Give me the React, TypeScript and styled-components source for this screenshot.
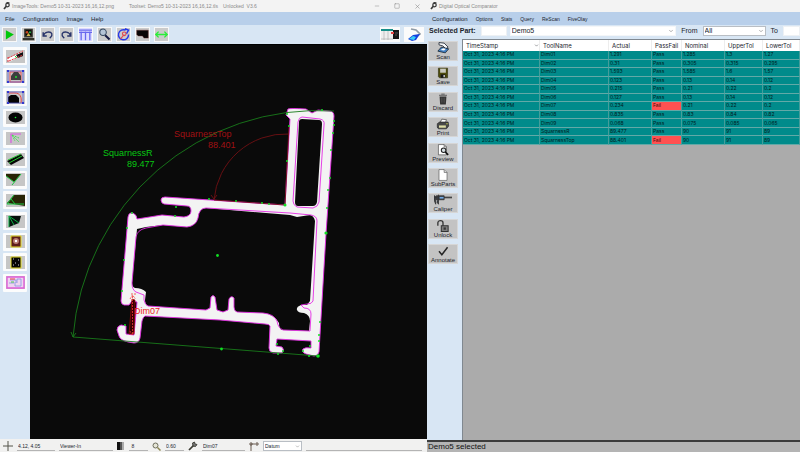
import React from "react";
import styled, { createGlobalStyle } from "styled-components";
import { ChevronDown, Minus, Square, X } from "lucide-react";

const GlobalStyle = createGlobalStyle`
  * { box-sizing: border-box; }
  body { margin: 0; background: #f0f0f0; }
  button, input, select { font: inherit; color: inherit; margin: 0; border-radius: 0; }
  svg { display: block; flex: none; }
`;

const sans = `"Liberation Sans", Arial, sans-serif`;

const Desktop = styled.div`
  display: grid;
  grid-template-columns: 427fr 373fr;
  height: 100vh;
  overflow: hidden;
  font: 6px/8px ${sans};
  color: #20242c;
`;

const Pane = styled.section`
  display: flex;
  flex-direction: column;
  min-width: 0;
  min-height: 0;
  background: #d8e6f4;
`;

const TitleBar = styled.header`
  display: flex;
  align-items: center;
  flex: none;
  height: 12px;
  padding: 0 6px 0 3px;
  gap: 2px;
  background: #f3f3f3;
  color: #8a8a8a;
  font-size: 5px;
  white-space: pre;
`;

const TitleText = styled.span<{ $gap?: number }>`
  margin-right: ${(p) => p.$gap ?? 0}px;
`;

const WindowButtons = styled.div`
  display: flex;
  margin-left: auto;
  gap: 12px;
`;

const WindowButton = styled.button`
  display: grid;
  place-items: center;
  width: 8px;
  height: 8px;
  padding: 0;
  border: 0;
  background: none;
`;

const MenuBar = styled.nav<{ $gap: number }>`
  display: flex;
  align-items: center;
  flex: none;
  height: 13px;
  padding: 0 5px;
  gap: ${(p) => p.$gap}px;
  background: #b8cfea;
`;

const MenuItem = styled.button<{ $small?: boolean }>`
  padding: 0;
  border: 0;
  background: none;
  font-size: ${(p) => (p.$small ? 5 : 6)}px;
`;

const ToolBar = styled.div`
  display: flex;
  align-items: center;
  flex: none;
  height: 19px;
  padding: 0 3px 0 2px;
  gap: 4px;
`;

const ToolButton = styled.button<{ $plain?: boolean }>`
  display: grid;
  place-items: center;
  width: 15px;
  height: 15px;
  padding: 0;
  border: 1px solid #f8f8f8;
  background: ${(p) => (p.$plain ? "#dcdcff" : "#cbcbcb")};
`;

const ViewButton = styled.button<{ $first?: boolean }>`
  display: grid;
  place-items: center;
  width: 20px;
  height: 15px;
  padding: 0;
  border: 0;
  background: #fbfbfb;
  margin-left: ${(p) => (p.$first ? "auto" : 0)};
`;

const Body = styled.div`
  display: flex;
  flex: 1;
  min-height: 0;
`;

const Palette = styled.aside`
  display: flex;
  flex-direction: column;
  justify-content: space-between;
  align-items: center;
  flex: none;
  width: 30px;
  height: 248px;
  padding-top: 3px;
`;

const PaletteButton = styled.button`
  display: grid;
  place-items: center;
  width: 24px;
  height: 18px;
  padding: 0;
  border: 0;
  border-radius: 1px;
  background: #fcfcfc;
`;

const Viewer = styled.main`
  flex: 1;
  min-width: 0;
  background: #0a0a0a;
  border-top: 1px solid #000;
  svg { width: 100%; height: 100%; }
`;

const StatusBar = styled.footer`
  display: flex;
  align-items: center;
  flex: none;
  height: 13px;
  padding: 1px 5px 0 3px;
  gap: 4px;
  background: #f1f1f0;
  font-size: 5px;
`;

const StatusField = styled.input<{ $width?: number }>`
  ${(p) => (p.$width ? `flex: none; width: ${p.$width}px;` : "flex: 1; min-width: 0;")}
  height: 10px;
  padding: 0 1px;
  border: 0;
  border-bottom: 1px solid #b4b4b4;
  background: none;
  outline: 0;
`;

const SelectBox = styled.span<{ $grow?: boolean; $width?: number; $framed?: boolean }>`
  display: grid;
  align-items: center;
  ${(p) => (p.$grow ? "flex: 1; min-width: 0;" : `flex: none; width: ${p.$width}px;`)}
  height: 10px;
  background: #fff;
  border: 1px solid ${(p) => (p.$framed ? "#b9bec4" : "#f4f6f8")};
  > * { grid-area: 1 / 1; }
  svg { justify-self: end; margin-right: 1px; pointer-events: none; color: #666; }
`;

const Select = styled.select`
  width: 100%;
  height: 8px;
  padding: 0 8px 0 1px;
  border: 0;
  appearance: none;
  background: transparent;
  outline: 0;
`;

const FilterBar = styled.form`
  display: flex;
  align-items: center;
  flex: none;
  height: 14px;
  padding: 0 0 3px 2px;
  gap: 3px;
  font-size: 7px;
`;

const FilterLabel = styled.label<{ $bold?: boolean }>`
  flex: none;
  margin: 0 2px;
  margin-left: ${(p) => (p.$bold ? 0 : 2)}px;
  font-weight: ${(p) => (p.$bold ? 700 : 400)};
  white-space: nowrap;
`;

const FilterInput = styled.input<{ $width: number }>`
  flex: none;
  width: ${(p) => p.$width}px;
  height: 10px;
  padding: 0 1px;
  border: 1px solid #eef1f4;
  background: #fff;
`;

const Actions = styled.aside`
  display: flex;
  flex-direction: column;
  justify-content: space-between;
  flex: none;
  width: 35px;
  height: 225px;
  padding: 2px 4px 0 1px;
`;

const ActionButton = styled.button`
  display: flex;
  flex-direction: column;
  align-items: center;
  justify-content: space-between;
  width: 30px;
  height: 20px;
  padding: 0;
  border: 1px solid #d6d6d6;
  background: #c3c3c3;
  line-height: 6px;
`;

const Results = styled.div`
  flex: 1;
  min-width: 0;
  background: #ababab;
  border-top: 1px solid #808890;
  border-left: 1px solid #808890;
  overflow: hidden;
`;

const Table = styled.table`
  width: 100%;
  height: 105px;
  table-layout: fixed;
  border-collapse: separate;
  border-spacing: 0;
  font: 5px/7px Inter, ${sans};
`;

const HeadCell = styled.th<{ $width: number }>`
  width: ${(p) => p.$width}px;
  height: 11px;
  padding: 0 0 0 3px;
  border-right: 1px solid #ededed;
  background: #fff;
  font-size: 6px;
  font-weight: 400;
  text-align: left;
  white-space: nowrap;
`;

const HeadContent = styled.span`
  display: flex;
  align-items: center;
  justify-content: space-between;
`;

const Cell = styled.td<{ $fail?: boolean }>`
  padding: 0 1px;
  border-right: 1px solid #459d9b;
  border-bottom: 1px solid #62a9a7;
  background: ${(p) => (p.$fail ? "#ff5151" : "#008b8b")};
  color: ${(p) => (p.$fail ? "#3c0808" : "#021c1e")};
  white-space: nowrap;
`;

const Message = styled.footer`
  flex: none;
  height: 12px;
  padding-left: 1px;
  border-top: 2px solid #3c3c3c;
  background: #b4b4b4;
  color: #111;
  font-size: 8px;
  line-height: 10px;
`;

const AppMark = () => (
  <svg width="7" height="8" viewBox="0 0 14 16" fill="none" stroke="#3c3c3c" strokeWidth="2.5">
    <path d="M2 14l5-6" strokeWidth="3.5" />
    <circle cx="9" cy="6" r="3.5" />
    <path d="M6 3l3-2 4 1" />
  </svg>
);

const Wrench = () => (
  <svg width="10" height="10" viewBox="0 0 20 20" fill="none" stroke="#3b3b32" strokeWidth="3.5">
    <path d="M2 18L12 8" />
    <path d="M9 4l4-2 1 4 4 1-3 4-5-1z" fill="#777" strokeWidth="1.8" />
  </svg>
);

const toolIcons: [string, React.ReactNode][] = [
  ["Run", <path d="M4 3l11 6-11 7z" fill="#00c80a" />],
  ["Camera", <><path d="M3 1h12v12H3zM1 14h16v3H1z" fill="#35352d" /><path d="M5 3h8v8H5z" fill="#050505" /><circle cx="7" cy="6" r="1.8" fill="#c84920" /><circle cx="11" cy="6" r="1.6" fill="#2aa646" /><path d="M6 11l3-4 3 4z" fill="#d1b64b" /></>],
  ["Undo", <path d="M3 6v5h5M3 11c2-6 10-7 12-3 1 3-1 4-3 6" fill="none" stroke="#27336a" strokeWidth="1.9" />],
  ["Redo", <path d="M15 6v5h-5M15 11c-2-6-10-7-12-3-1 3 1 4 3 6" fill="none" stroke="#27336a" strokeWidth="1.9" />],
  ["Columns", <path d="M0 3h18M3 5v12M9 5v12M15 5v12M0 6h18" fill="none" stroke="#6868ee" strokeWidth="1.8" />],
  ["Zoom", <><circle cx="7" cy="6" r="4.500" fill="#b4c4d6" stroke="#33465d" strokeWidth="1.4" /><path d="M10 10l6 6" stroke="#151a42" strokeWidth="2.8" /></>],
  ["Rotate", <><path d="M12 3A7 7 0 1 0 16 9M11 1l5 2-3 5" fill="none" stroke="#2939e8" strokeWidth="2" /><path d="M5 15l5-6" stroke="#e2484e" strokeWidth="1.5" /><circle cx="10" cy="8" r="2.500" fill="none" stroke="#e2484e" strokeWidth="1.5" /></>],
  ["Shape", <path d="M1 3h16v11h-6l-2-3H3l-2-2z" fill="#090606" stroke="#773535" strokeWidth=".6" />],
  ["Measure", <path d="M1 9h16M5 5L1 9l4 4M13 5l4 4-4 4" fill="none" stroke="#29ef38" strokeWidth="1.8" />],
];

const paletteIcons: [string, React.ReactNode][] = [
  ["Line edge", <><path d="M1 9L17 1v4L3 12z" fill="#fff" /><path d="M10 5l7-3v4l-5 2z" fill="#111" /><path d="M2 8L17 1M3 11l14-6M2 7v5" fill="none" stroke="#e53b42" strokeDasharray="2 1" /><path d="M9 6l2 2" stroke="#22df38" /></>],
  ["Circle region", <><path d="M4 2h11v10H4z" fill="none" stroke="#e55" /><path d="M5 10V6l3-4h4l3 4v4z" fill="#3d3d3d" /><circle cx="10" cy="7" r="1" fill="#21df36" /><path d="M2 1h15v11H2z" fill="none" stroke="#5257d6" strokeWidth=".7" /><path d="M1 0h2v2H1zM16 0h2v2h-2zM1 11h2v2H1zM16 11h2v2h-2z" fill="#3338d0" /></>],
  ["Corner arc", <><path d="M2 12V6l3-2h5l3 3v5z" fill="#050505" /><path d="M3 2h6c5 0 7 4 6 10" fill="none" stroke="#e94848" /><path d="M2 1h15v11H2z" fill="none" stroke="#5257d6" strokeWidth=".7" /><path d="M1 0h2v2H1zM16 0h2v2h-2zM1 11h2v2H1zM16 11h2v2h-2z" fill="#3338d0" /></>],
  ["Ellipse", <><ellipse cx="9.5" cy="6.5" rx="7" ry="5" fill="#030303" /><circle cx="9.5" cy="6.5" r=".8" fill="#18ed36" /></>],
  ["Angle", <><path d="M5 11V2h10" fill="none" stroke="#d95be2" strokeWidth="1.2" /><path d="M6 3l7 7M6 3l7 3M6 3l3 6" stroke="#49dc56" strokeDasharray="2 1" /></>],
  ["Parallel", <><path d="M1 8L15 1l3 4L5 12z" fill="#070707" /><path d="M3 10L16 3M2 7l13-6" stroke="#26c930" /></>],
  ["Vertex", <><path d="M0 1h15L8 9 0 3z" fill="#292507" /><path d="M15 1L6 12M0 3l8 6" stroke="#1fc341" fill="none" /></>],
  ["Wedge", <><path d="M8 1h11v11L1 9z" fill="#292507" /><path d="M8 1L1 10h17M5 5l4 5" stroke="#1bc942" fill="none" /></>],
  ["Arc", <><path d="M3 12V1h12l-2 7-5 2z" fill="#07100b" /><path d="M3 1v11M3 1l10 7M3 1l5 9" stroke="#0dae44" fill="none" /></>],
  ["Glow", <><path d="M5 1h10v11H5z" fill="#5d1d1a" stroke="#e8df2b" /><circle cx="10" cy="6" r="3" fill="#b97b70" /><circle cx="10" cy="6" r="1.2" fill="#fff" /></>],
  ["Specks", <><path d="M5 1h10v11H5z" fill="#050505" stroke="#e8df2b" /><path d="M7 3h1m4 1h1m-4 3h1m-3 2h1m4 0h1" stroke="#ccc" /></>],
  ["Layout", <><path d="M1 1h17v11H1z" fill="#efd3f0" stroke="#df5ed9" strokeWidth="1.4" /><path d="M4 4h6v3H3m8 0V3h4v7H9V8" fill="none" stroke="#8595e1" strokeWidth=".8" /><path d="M4 3h5" stroke="#e44" /><path d="M5 6h3" stroke="#4c4" /></>],
];

const actionIcons: [string, React.ReactNode][] = [
  ["Scan", <><path d="M5 1l9 1 7 7-4 3-5-5-7-2z" fill="#f7f8fa" stroke="#242d38" strokeWidth="1.5" /><path d="M3 16l6-7 13 3-6 7-13-3z" fill="#407fc2" stroke="#152331" strokeWidth="1.4" /><path d="M8 14l4-3 5 1-3 3z" fill="#fff" /></>],
  ["Save", <><path d="M4 2h16v17H6l-2-2z" fill="#4d4b0b" stroke="#292808" /><path d="M7 3h10v7H7z" fill="#c8c8bd" /><path d="M8 13h8v6H8z" fill="#171717" /><path d="M13 14h2v4h-2z" fill="#fff" /></>],
  ["Discard", <><path d="M6 6h12l-1 14H7z" fill="#353535" /><path d="M5 4h14M9 2h6M10 8v9M14 8v9" stroke="#555" strokeWidth="1.6" /></>],
  ["Print", <><path d="M7 8l3-6 8 1-2 6" fill="#fff" stroke="#222" /><path d="M2 10l4-3h15l1 7-4 5H4l-2-3z" fill="#484848" stroke="#1b1b1b" /><path d="M5 13h12v4H5z" fill="#dddda4" /><path d="M18 10h2" stroke="#e6ef4e" strokeWidth="2" /></>],
  ["Preview", <><path d="M4 1h10l4 4v14H4z" fill="#fff" stroke="#333" /><path d="M14 1v4h4" fill="none" stroke="#333" /><circle cx="13" cy="11" r="4" fill="#d5dde1" stroke="#222" strokeWidth="1.8" /><path d="M16 14l5 5" stroke="#111" strokeWidth="3" /></>],
  ["SubParts", <><path d="M5 1h9l5 5v14H5z" fill="#fff" stroke="#444" /><path d="M14 1v5h5" fill="#ddd" stroke="#444" /></>],
  ["Caliper", <><path d="M0 6h32" stroke="#444" strokeWidth="3" /><path d="M0 2v8l3 8V4M8 1v17l-3-4M4 3h14v7H4z" fill="#353b42" stroke="#333" strokeWidth="1.4" /><path d="M10 5h7v3h-7z" fill="#74abe6" /></>],
  ["Unlock", <><path d="M3 10V5c0-5 9-5 9 0v6" fill="none" stroke="#343434" strokeWidth="2.3" /><path d="M9 10h12v10H9z" fill="#7c7c7c" stroke="#333" strokeWidth="1.8" /><path d="M13 13h4v4h-4z" fill="#333" /></>],
  ["Annotate", <path d="M5 11l5 6L20 4" fill="none" stroke="#252525" strokeWidth="2.6" />],
];

const outer =
  "M288 109 Q290 108 306 109 L312 113 L318 110 L329 111 Q334 111 334 116 L326 234 L319 352 Q318 356 314 356 L306 354 Q301 352 303 349 Q305 347 311 348 L311 341 L277 339 L276 346 L282 347 Q285 350 282 353 L273 353 Q269 352 269 348 L270 326 Q269 324 265 324 L220 320 L145 316 Q143 317 142 321 L140 338 Q139 343 134 343 L128 342 Q120 340 119 336 L117 330 Q117 326 121 325 L126 326 L126 334 L134 335 L137 302 L132 301 L129 305 L124 305 Q121 304 121 301 L128 217 Q129 212 133 213 Q137 215 137 219 L162 215 L184 217 Q191 216 191 211 Q191 206 187 206 L164 204 Q161 203 161 200 Q161 197 165 197 L285 205 L290 119 L286 115 Z";
const upperHole =
  "M299 122 Q299 119 302 119 L319 120 Q322 120 322 124 L317 202 Q316 206 313 206 L298 206 Q295 206 295 202 Z";
const chamber =
  "M137 229 L146 227 L163 225 L187 227 Q196 226 198 218 Q199 208 206 208 L290 215 L297 217 L310 215 Q314 216 315 221 L310 301 L307 305 L301 305 Q296 307 297 310 Q298 313 304 313 Q310 315 310 321 L309 331 L282 330 Q279 329 279 323 Q274 314 263 313 L237 312 Q234 311 234 307 L234 298 Q231 295 229 299 L228 310 L223 312 L217 310 L215 297 Q213 294 211 297 L210 308 L206 310 L148 306 Q145 305 145 300 L146 292 Q142 288 135 288 Q132 287 132 283 Z";

const points: [number, number, number?][] = [
  [287, 114], [289, 126], [287, 161], [285, 205, 1.5], [334, 121], [334, 125], [333, 133], [331, 150],
  [330, 178], [328, 190], [327, 208], [326, 233, 1.6], [320, 322], [319, 335], [319, 341], [318, 356, 1.8],
  [217.5, 255.5, 1.4], [221.5, 349, 1.4], [132, 213], [127, 228], [124, 260], [122, 291], [209, 199],
  [236, 201], [262, 203], [269, 204], [176, 207], [175, 216], [322, 110], [277, 344], [310, 346],
  [283, 351], [278, 354], [309, 356], [303, 351], [125, 325],
];

const PartView = () => (
  <svg viewBox="30 45 397 394" preserveAspectRatio="xMidYMid meet" role="img" aria-label="Part profile" fontFamily="Liberation Sans, Arial, sans-serif" fontSize="9">
    <path d={outer + upperHole + chamber} fill="#f3f3f3" fillRule="evenodd" />
    <g fill="none" stroke="#e32be3" strokeWidth=".9">
      <path d={outer} />
      <path d="M298 122 Q299 117 302 117 L320 119 Q325 120 324 125 L319 202 Q318 207 313 208 L297 207 Q293 205 293 201 Z" />
      <path d="M136 237 Q137 230 146 228 L163 225 L187 227 Q196 226 198 218 Q199 208 206 208 L290 213 L311 215 Q317 216 317 221 L313 301 Q312 304 307 304 L301 305 L304 308 Q311 308 311 314 L310 331 L283 330 Q278 328 277 321 Q274 314 263 313 L237 312 Q234 311 234 307 L234 298 Q231 295 229 299 L228 310 L223 312 L217 310 L215 297 Q213 294 211 297 L210 308 L206 310 L148 306 Q145 305 144 300 L144 295 L136 292 Q132 290 132 283 Z" />
    </g>
    <path d="M132 299 L135 300 L134 334 L129 334 Z" fill="#340000" stroke="#a50808" strokeWidth=".7" />
    <path d="M132.500 296V334M130 299l2.500-4 3 4M130 331l2 4 3-4M131 294h5" fill="none" stroke="#f03535" strokeWidth=".8" strokeDasharray="2 1" />
    <g fill="none" stroke="#187a1b" strokeWidth=".9">
      <path d="M334 111 A246 246 0 0 0 73 337 L318 356" />
      <path d="M71 332l2 5 3-4" />
    </g>
    <g fill="none" stroke="#701013" strokeWidth=".9">
      <path d="M289 134 A72 72 0 0 0 214 200 L285 205 L289 126" />
      <path d="M211 195l3 4 3-4" />
    </g>
    <g fill="#10df22">
      {points.map(([x, y, r], i) => <circle key={i} cx={x} cy={y} r={r ?? 1} />)}
    </g>
    <g fill="#08c812">
      <text x="103" y="156">SquarnessR</text>
      <text x="127" y="167">89.477</text>
    </g>
    <g fill="#a01013">
      <text x="174" y="137">SquarnessTop</text>
      <text x="208" y="148">88.401</text>
    </g>
    <text x="134" y="314" fill="#ed2525">Dim07</text>
  </svg>
);

const columns: [string, number][] = [
  ["TimeStamp", 77], ["ToolName", 69], ["Actual", 43], ["PassFail", 30], ["Nominal", 43], ["UpperTol", 38], ["LowerTol", 37],
];

const measurements = [
  ["Dim01", "1.291", "Pass", "1.285", "1.3", "1.27"],
  ["Dim02", "0.31", "Pass", "0.305", "0.315", "0.295"],
  ["Dim03", "1.593", "Pass", "1.585", "1.6", "1.57"],
  ["Dim04", "0.123", "Pass", "0.13", "0.14", "0.12"],
  ["Dim05", "0.215", "Pass", "0.21", "0.22", "0.2"],
  ["Dim06", "0.127", "Pass", "0.13", "0.14", "0.12"],
  ["Dim07", "0.234", "Fail", "0.21", "0.22", "0.2"],
  ["Dim08", "0.835", "Pass", "0.83", "0.84", "0.82"],
  ["Dim09", "0.068", "Pass", "0.075", "0.085", "0.065"],
  ["SquarnessR", "89.477", "Pass", "90", "91", "89"],
  ["SquarnessTop", "88.401", "Fail", "90", "91", "89"],
];

const ImageTools = () => (
  <Pane>
    <TitleBar>
      <AppMark />
      <TitleText $gap={13}>ImageTools: Demo5 10-31-2023 16,16,12.png</TitleText>
      <TitleText $gap={3}>Toolset: Demo5 10-31-2023 16,16,12.tls</TitleText>
      <TitleText>Unlocked  V3.6</TitleText>
      <WindowButtons>
        <WindowButton aria-label="Minimize"><Minus size={6} /></WindowButton>
        <WindowButton aria-label="Maximize"><Square size={6} /></WindowButton>
        <WindowButton aria-label="Close"><X size={7} /></WindowButton>
      </WindowButtons>
    </TitleBar>
    <MenuBar $gap={8}>
      {["File", "Configuration", "Image", "Help"].map((m) => <MenuItem key={m}>{m}</MenuItem>)}
    </MenuBar>
    <ToolBar>
      {toolIcons.map(([name, icon]) => (
        <ToolButton key={name} aria-label={name} $plain={name === "Columns"}>
          <svg width="13" height="13" viewBox="0 0 18 18">{icon}</svg>
        </ToolButton>
      ))}
      <ViewButton $first aria-label="Results table">
        <svg width="18" height="11" viewBox="0 0 18 11">
          <path d="M0 0h12v11H0z" fill="#eee" />
          <path d="M0 1h12" stroke="#168e88" strokeWidth="2" />
          <path d="M3 2v9M7 2v9M0 10h12" stroke="#aaa" strokeWidth=".6" />
          <path d="M12 1h6v9h-6z" fill="#171717" />
          <path d="M10 3h3v2h-3z" fill="#e34343" />
          <path d="M14 4h3M14 6h2" stroke="#777" strokeWidth=".6" />
        </svg>
      </ViewButton>
      <ViewButton aria-label="Scanner">
        <svg width="14" height="14" viewBox="0 0 14 14">
          <path d="M4 1l5 1 4 4-3 2" fill="none" stroke="#909ba5" strokeWidth="1.6" />
          <path d="M1 11l5-4 7-1-4 6-4 1z" fill="#1541de" />
          <path d="M2 11l4-3 3 1-2 3z" fill="#39cdf5" />
        </svg>
      </ViewButton>
    </ToolBar>
    <Body>
      <Palette>
        {paletteIcons.map(([name, icon]) => (
          <PaletteButton key={name} aria-label={name}>
            <svg width="19" height="13" viewBox="0 0 19 13"><path d="M0 0h19v13H0z" fill="#c6c6c6" />{icon}</svg>
          </PaletteButton>
        ))}
      </Palette>
      <Viewer><PartView /></Viewer>
    </Body>
    <StatusBar>
      <svg width="10" height="10" viewBox="0 0 10 10"><path d="M0 5h10M5 0v10" stroke="#55554a" /></svg>
      <StatusField aria-label="Position" $width={38} defaultValue="4.12, 4.05" />
      <StatusField aria-label="Source" $width={54} defaultValue="Viewer-In" />
      <svg width="8" height="8" viewBox="0 0 8 8"><path d="M0 0h3v8H0z" fill="#111" /><path d="M3 0h2v8H3z" fill="#555" /><path d="M5 0h2v8H5z" fill="#aaa" /></svg>
      <StatusField aria-label="Level" $width={19} defaultValue=" 8" />
      <svg width="9" height="9" viewBox="0 0 18 18" fill="none"><circle cx="7" cy="7" r="5" fill="#e5e5d6" stroke="#6d6d5d" strokeWidth="2" /><path d="M11 11l6 6" stroke="#8b8650" strokeWidth="3" /></svg>
      <StatusField aria-label="Scale" $width={19} defaultValue="0.60" />
      <Wrench />
      <StatusField aria-label="Tool" $width={43} defaultValue="Dim07" />
      <svg width="10" height="9" viewBox="0 0 10 9"><path d="M2 9V2h8M0 2h4M2 0v4M8 0v4" stroke="#6b5d52" fill="none" /></svg>
      <SelectBox $width={39} $framed>
        <Select aria-label="Reference"><option>Datum</option></Select>
        <ChevronDown size={5} />
      </SelectBox>
      <StatusField aria-label="Note" />
    </StatusBar>
  </Pane>
);

const Comparator = () => (
  <Pane>
    <TitleBar>
      <AppMark />
      <TitleText>Digital Optical Comparator</TitleText>
    </TitleBar>
    <MenuBar $gap={8}>
      {["Configuration", "Options", "Stats", "Query", "ReScan", "FiveOlay"].map((m, i) => (
        <MenuItem key={m} $small={i > 0}>{m}</MenuItem>
      ))}
    </MenuBar>
    <FilterBar onSubmit={(e) => e.preventDefault()}>
      <FilterLabel $bold htmlFor="part-code">Selected Part:</FilterLabel>
      <FilterInput id="part-code" $width={26} />
      <SelectBox $grow>
        <Select aria-label="Part name"><option>Demo5</option></Select>
        <ChevronDown size={6} />
      </SelectBox>
      <FilterLabel htmlFor="from">From</FilterLabel>
      <SelectBox $width={63} $framed>
        <Select id="from"><option>All</option></Select>
        <ChevronDown size={6} />
      </SelectBox>
      <FilterLabel htmlFor="to">To</FilterLabel>
      <FilterInput id="to" $width={17} />
    </FilterBar>
    <Body>
      <Actions>
        {actionIcons.map(([name, icon]) => (
          <ActionButton key={name}>
            <svg width={name === "Caliper" ? 18 : 14} height="12" viewBox={name === "Caliper" ? "0 0 32 21" : "0 0 24 21"}>{icon}</svg>
            {name}
          </ActionButton>
        ))}
      </Actions>
      <Results>
        <Table>
          <thead>
            <tr>
              {columns.map(([name, width], i) => (
                <HeadCell key={name} $width={width} scope="col">
                  <HeadContent>{name}{i === 0 && <ChevronDown size={5} />}</HeadContent>
                </HeadCell>
              ))}
            </tr>
          </thead>
          <tbody>
            {measurements.map((row) => (
              <tr key={row[0]}>
                <Cell>Oct 31, 2023 4:16 PM</Cell>
                {row.map((value, i) => <Cell key={i} $fail={value === "Fail"}>{value}</Cell>)}
              </tr>
            ))}
          </tbody>
        </Table>
      </Results>
    </Body>
    <Message>Demo5 selected</Message>
  </Pane>
);

export default function App() {
  return (
    <>
      <GlobalStyle />
      <Desktop>
        <ImageTools />
        <Comparator />
      </Desktop>
    </>
  );
}
